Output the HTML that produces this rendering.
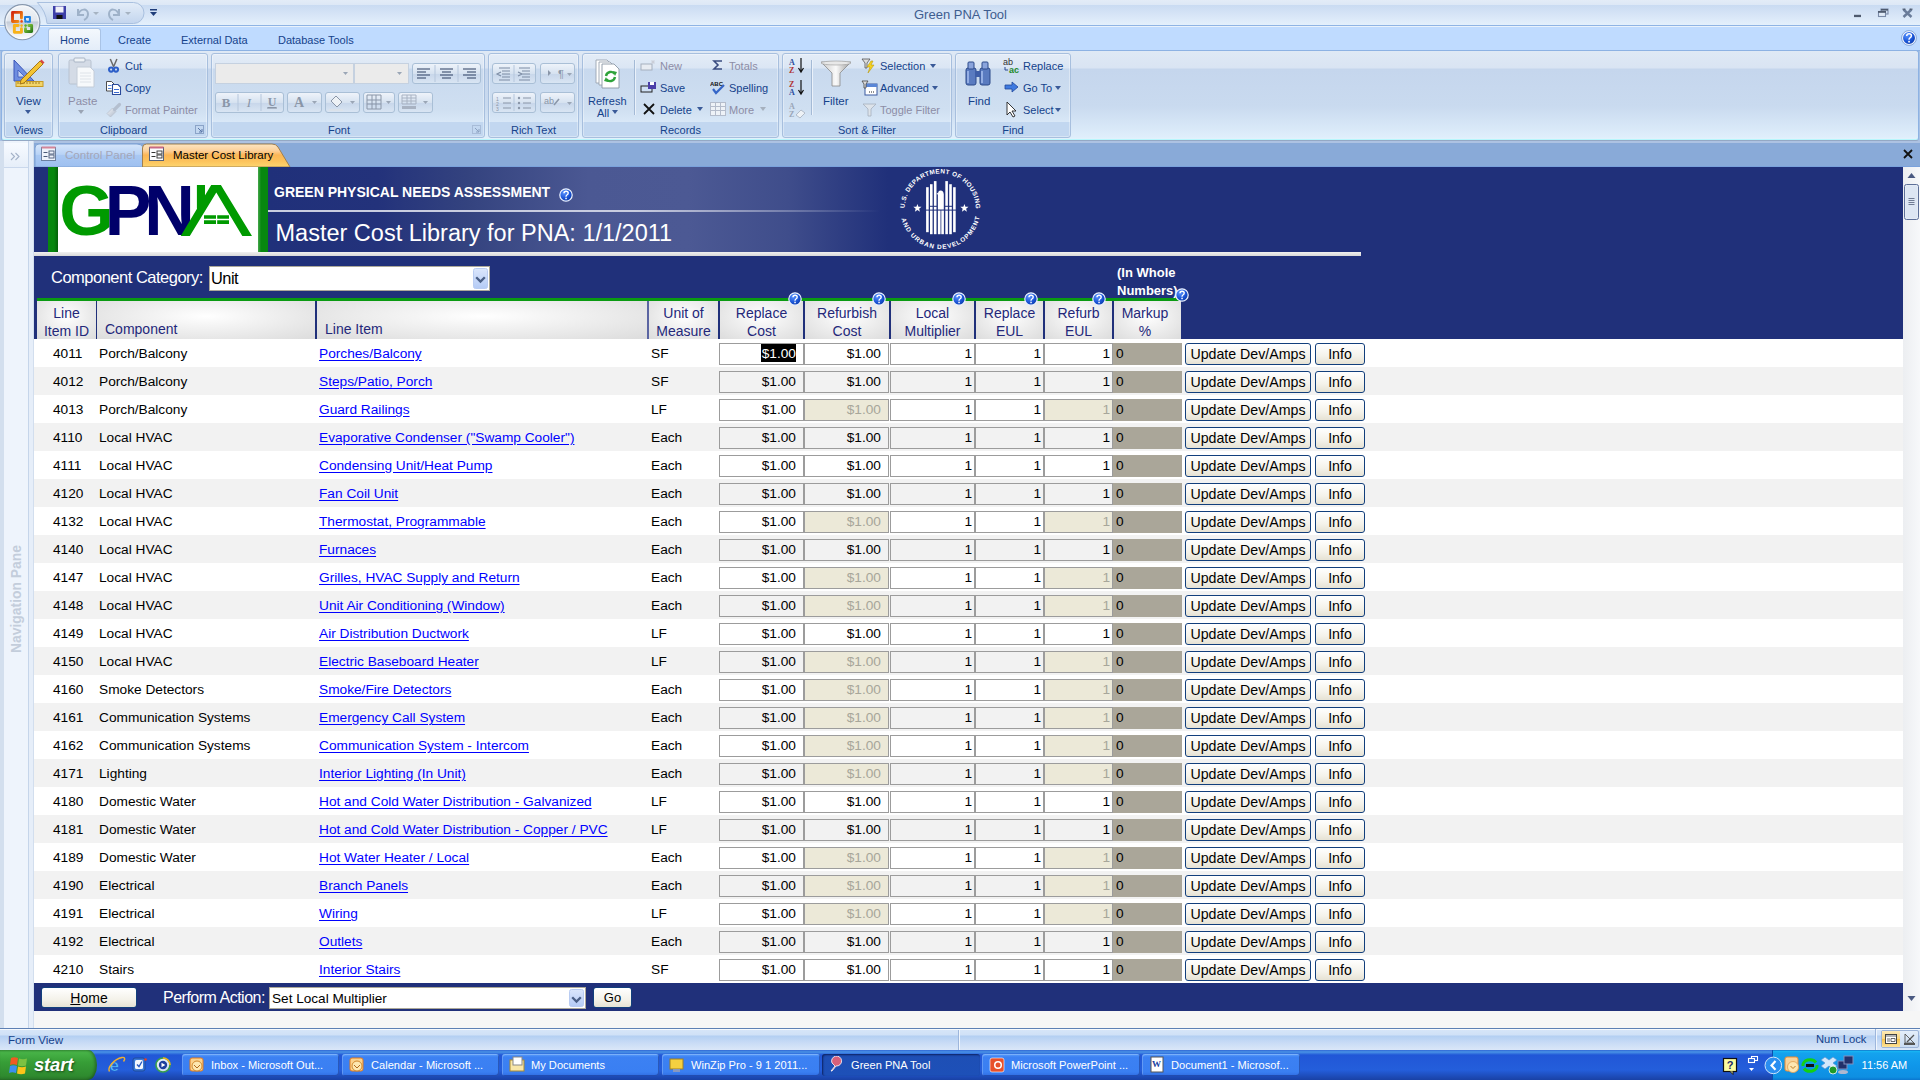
<!DOCTYPE html>
<html><head><meta charset="utf-8"><title>Green PNA Tool</title>
<style>
html,body{margin:0;padding:0;}
body{width:1920px;height:1080px;overflow:hidden;position:relative;background:#fff;font-family:"Liberation Sans",sans-serif;}
.a{position:absolute;}
#title{left:0;top:0;width:1920px;height:26px;background:linear-gradient(#e3ecf7 0,#dde8f6 5px,#c9dbf2 5px,#d6e4f6 14px,#e4f0fc 25px,#8fb4e4 25px);}
#ttxt{left:914px;top:7px;font-size:13px;color:#3e5d8f;white-space:nowrap;}
#tabs{left:0;top:26px;width:1920px;height:25px;background:linear-gradient(#e9f2fc 0,#e9f2fc 1px,#bfdbff 1px,#bfdbff 24px,#8db2e3 24px);}
.rt{top:34px;font-size:11px;color:#15428b;white-space:nowrap;}
#hometab{left:48px;top:28px;width:53px;height:24px;border:1px solid #a9c3e6;border-bottom:none;border-radius:3px 3px 0 0;background:linear-gradient(#f4f8fd,#e2ecf8);box-sizing:border-box;}
#ribbon{left:0;top:51px;width:1920px;height:90px;background:#a9c2e4;}
#ribbon2{left:1px;top:50px;width:1918px;height:91px;box-sizing:border-box;border:1px solid #8db2e3;border-bottom-color:#94a8c4;border-radius:3px;background:linear-gradient(#dfe9f5 0,#d9e4f3 17px,#c5d6ed 18px,#c9daef 55px,#dfeefb 86px,#e2f2fc 88px);box-shadow:inset 0 -1px 0 #b8f6fc;}
.grp{top:53px;height:85px;box-sizing:border-box;border:1px solid #a7bfde;border-radius:3px;background:linear-gradient(#e3ecf7 0,#dbe6f4 14px,#c8d9ee 15px,#cfdff1 55px,#d9e8f7 68px,#c2d7f0 68px,#c2d7f0 100%);box-shadow:inset 0 0 0 1px rgba(255,255,255,0.35);}
.gl{top:124px;font-size:11px;color:#15428b;text-align:center;white-space:nowrap;}
.rb{font-size:11px;color:#15428b;white-space:nowrap;margin-top:1px;}
.rb.dis{color:#8d8da6;}
.sb{box-sizing:border-box;border:1px solid #a9bfd6;border-radius:3px;background:linear-gradient(#eef3fa,#d6e2f0 50%,#c7d6ea 51%,#d9e5f3);}
.cb{box-sizing:border-box;border:1px solid #c5d1e0;background:#ebebeb;}
#doctabs{left:0;top:141px;width:1920px;height:26px;background:linear-gradient(#adc2e2 0,#adc2e2 2px,#89aad8 2px,#89aad8 25px,#7aa2dc 25px);}
#nav{left:0;top:141px;width:34px;height:887px;background:linear-gradient(90deg,#d3dfee 0,#d3dfee 4px,#eef4fc 4px,#eef4fc 28px,#c5d5ea 28px,#c5d5ea 29px,#e6eef9 29px,#e6eef9 33px,#d2deee 33px);}
#navin{display:none;}
#navtxt{left:-39px;top:591px;width:110px;transform:rotate(-90deg);font-size:13.9px;font-weight:bold;color:#c3cddb;white-space:nowrap;text-align:center;}
#vscroll{left:1903px;top:167px;width:17px;height:844px;background:linear-gradient(90deg,#eceef1,#f7f8fa);}
#status{left:0;top:1028px;width:1920px;height:22px;background:linear-gradient(#5d80b4 0,#5d80b4 1px,#f5f9fe 1px,#f5f9fe 2px,#d6e5f8 2px,#d0e1f7 7px,#b3cff2 8px,#c6daf5 14px,#dae7f8 22px);}
#taskbar{left:0;top:1050px;width:1920px;height:30px;background:linear-gradient(#3168d5 0,#4993e6 2px,#2157d7 5px,#245edb 20px,#1941a5 30px);}
.tbb{top:1054px;height:22px;box-sizing:border-box;border-radius:3px;background:linear-gradient(#5ea2fb 0,#3c81f3 3px,#3a7ff2 18px,#2f6ce2 22px);box-shadow:inset 1px 1px 0 rgba(255,255,255,0.2),inset -1px -1px 0 rgba(0,0,60,0.3);font-size:11.1px;color:#fff;white-space:nowrap;padding-left:29px;line-height:22px;}
.tbb.act{background:linear-gradient(#1e4fb5 0,#1d50b8 100%);box-shadow:inset 1px 1px 2px rgba(0,0,40,0.6);}
#start{left:0;top:1050px;width:97px;height:30px;border-radius:0 9px 9px 0/0 15px 15px 0;background:linear-gradient(#3c9f3c 0,#47b347 8%,#379e37 40%,#2f8b2f 85%,#2a7a2a 100%);box-shadow:inset -2px 0 3px rgba(0,0,0,0.3);}
#stxt{left:34px;top:1054px;font-size:18.5px;letter-spacing:-0.2px;font-style:italic;font-weight:bold;color:#fff;text-shadow:1px 1px 2px #1a4d1a;}
#tray{left:1773px;top:1050px;width:147px;height:30px;background:linear-gradient(#0c59b9 0,#18b9f4 1px,#14a3ee 3px,#0f97ea 15px,#0e8fe2 27px,#0a76cf 30px);box-shadow:-1px 0 0 #0a4fad;}
#form{left:34px;top:167px;width:1869px;height:861px;background:#f6f6f6;overflow:hidden;}
#hdr{left:0;top:0;width:1869px;height:172px;background:#20307a;}
#tband{left:234px;top:0;width:1093px;height:85px;background:linear-gradient(90deg,#20307a 0,#23327b 110px,#34437f 200px,#4b5893 320px,#4c5994 420px,#3f4d8b 520px,#20307a 620px,#20307a 100%);}
.t1{left:240px;top:17px;color:#fff;font-weight:bold;font-size:14px;white-space:nowrap;}
.t2{left:241.5px;top:53px;color:#fff;font-size:23.5px;white-space:nowrap;}
.help{width:14px;height:14px;border-radius:50%;background:radial-gradient(circle at 40% 35%,#7fb0ff 0,#2a64d6 55%,#153f9e 100%);box-shadow:0 0 0 1px #dfe8f8;}
.ccl{left:17px;top:101px;color:#fff;font-size:16.5px;letter-spacing:-0.5px;white-space:nowrap;}
.ccbox{left:175px;top:99px;width:281px;height:25px;background:#fff;box-sizing:border-box;border:1px solid #aca899;}
.ccbox span{position:absolute;left:1px;top:1.5px;font-size:16.4px;letter-spacing:-0.5px;color:#000;}
.dd{position:absolute;right:1px;top:1px;}
.iwn{left:1083px;top:96.5px;color:#fff;font-weight:bold;font-size:13px;line-height:18px;white-space:nowrap;}
.hc{top:134px;height:38px;background:radial-gradient(ellipse at 50% 40%,#ffffff 0,#f4f4f4 30%,#dcdcdc 100%);color:#24287a;font-size:14px;line-height:18.4px;padding-top:3px;box-sizing:border-box;white-space:nowrap;}
.hc.c{text-align:center;}
.hc.l{padding-left:8px;padding-top:1px;}
.row{left:0;width:1869px;height:28px;background:#fff;}
.row.g{background:#f2f2f2;}
.row span{font-size:13.7px;color:#000;white-space:nowrap;top:5px;line-height:20px;}
.id{left:19px;width:28px;text-align:center;}
.cp{left:65px;}
.li{left:285px;text-decoration:underline;color:#0000ff !important;text-underline-offset:1.6px;}
.um{left:617px;}
.bx{top:4px !important;height:22px;box-sizing:border-box;border:1px solid #9c9c9c;background:#fff;text-align:right;line-height:20px !important;}
.row.g .bx{background:#f2f2f2;}
.bx.dis{background:#ece9d8 !important;color:#a7a69a !important;}
.b1{left:685px;width:85px;padding-right:7px;}
.b2{left:770px;width:85px;padding-right:7px;}
.b3{left:856px;width:85px;padding-right:2px;}
.b4{left:941px;width:69px;padding-right:2px;}
.b5{left:1010px;width:69px;padding-right:2px;}
.sel{background:#000;color:#fff;font-weight:normal;display:inline-block;height:18px;line-height:19px;vertical-align:top;padding:0 0 0 1px;}
.mk{left:1079px;top:4px !important;width:69px;height:22px;background:#aaa699;line-height:21px !important;padding-left:3px;box-sizing:border-box;}
.btn{box-sizing:border-box;border:1px solid #123f7c;border-radius:3px;background:linear-gradient(#ffffff,#f4f2ea 60%,#e6e2d4);text-align:center;color:#000;}
.bu{left:1151px;top:4px !important;width:126px;height:22px;font-size:14.2px !important;line-height:20px !important;}
.bi{left:1281px;top:4px !important;width:50px;height:22px;font-size:14.2px !important;line-height:20px !important;}
#bbar{left:0;top:816px;width:1869px;height:28px;background:#20307a;}
.hb{left:7px;top:820px;width:96px;height:21px;font-size:14px;line-height:20px;}
.pal{left:129px;top:822px;color:#fff;font-size:16px;letter-spacing:-0.5px;white-space:nowrap;}
.pabox{left:235px;top:820px;width:317px;height:22px;background:#fff;box-sizing:border-box;border:1px solid #aca899;}
.pabox span{position:absolute;left:2px;top:3px;font-size:13.6px;color:#000;}
.pabox .dd{top:1px;right:1px;}
.gob{left:559px;top:820px;width:39px;height:21px;font-size:13px;line-height:20px;}

.hc.mk2{padding-right:5px;}

</style></head><body>
<div id="title" class="a"></div>
<div id="ttxt" class="a">Green PNA Tool</div>
<!-- QAT pill -->
<svg class="a" style="left:30px;top:0" width="120" height="26" viewBox="0 0 120 26"><defs><linearGradient id="qat" x1="0" y1="0" x2="0" y2="1"><stop offset="0" stop-color="#e4edf8"/><stop offset="0.5" stop-color="#d3e1f3"/><stop offset="1" stop-color="#c3d5ee"/></linearGradient></defs><path d="M7.3 2.5 H103.5 A10.5 10.5 0 0 1 103.5 23.5 H17 Q16 11 7.3 2.5 Z" fill="url(#qat)" stroke="#a9c0df" stroke-width="1"/></svg>

<svg class="a" style="left:52px;top:5px" width="16" height="16" viewBox="0 0 16 16"><rect x="1" y="1" width="13" height="13" fill="#3d3fa8"/><rect x="3.5" y="1.5" width="8" height="6" fill="#f0f0f8"/><rect x="4.5" y="10" width="6" height="4" fill="#111"/></svg>
<svg class="a" style="left:74px;top:5px" width="60" height="16" viewBox="0 0 60 16"><path d="M4 4 v6 h6 M4 10 C6 3 14 3 14 9 C14 12 12 14 10 15" fill="none" stroke="#9fb2c9" stroke-width="2"/><path d="M19 7 l3 3 3-3z" fill="#a6b3c2"/><path d="M48 4 v6 h-6 M48 10 C46 3 38 3 38 9 C38 12 40 14 42 15" fill="none" stroke="#9fb2c9" stroke-width="2" transform="translate(-3,0)"/><path d="M51 7 l3 3 3-3z" fill="#a6b3c2"/></svg>
<svg class="a" style="left:149px;top:8px" width="9" height="9" viewBox="0 0 9 9"><rect x="1" y="1" width="7" height="1.5" fill="#1f3d7a"/><path d="M1 4 h7 l-3.5 4z" fill="#1f3d7a"/></svg>
<!-- window controls -->
<svg class="a" style="left:1848px;top:4px" width="72" height="20" viewBox="0 0 72 20"><rect x="6" y="10.8" width="7" height="2.3" fill="#4e5a6e"/><rect x="33" y="5" width="7" height="5" fill="none" stroke="#7a8aa8" stroke-width="1.1"/><rect x="33" y="5" width="7" height="1.6" fill="#4e5a6e"/><rect x="30.5" y="7.5" width="7" height="5" fill="#dfe9f6" stroke="#7a8aa8" stroke-width="1.1"/><rect x="30" y="7" width="8" height="1.8" fill="#4e5a6e"/><path d="M55.5 5.5 L63.5 13 M63.5 5.5 L55.5 13" stroke="#6a7c9a" stroke-width="2.4"/><rect x="54.5" y="4.6" width="3" height="1.2" fill="#4e5a6e"/><rect x="61.5" y="4.6" width="3" height="1.2" fill="#4e5a6e"/></svg>
<div id="tabs" class="a"></div>
<div id="hometab" class="a"></div>
<div class="a rt" style="left:60px">Home</div>
<div class="a rt" style="left:118px">Create</div>
<div class="a rt" style="left:181px">External Data</div>
<div class="a rt" style="left:278px">Database Tools</div>
<svg class="a" style="left:1901px;top:30px" width="16" height="16" viewBox="0 0 16 16"><defs><radialGradient id="hg2" cx="35%" cy="30%" r="75%"><stop offset="0" stop-color="#5b95ff"/><stop offset="0.6" stop-color="#1c56d8"/><stop offset="1" stop-color="#0a3aa8"/></radialGradient></defs><circle cx="8" cy="8" r="6.6" fill="url(#hg2)" stroke="#f4f8ff" stroke-width="1.3"/><circle cx="8" cy="8" r="7.4" fill="none" stroke="#5a7fc0" stroke-width="0.6"/><path d="M5.7 6 Q5.7 3.8 8.1 3.8 Q10.4 3.8 10.4 5.8 Q10.4 7.1 9 7.9 Q8 8.5 8 9.8" fill="none" stroke="#fff" stroke-width="1.5"/><rect x="7.2" y="10.8" width="1.7" height="1.7" fill="#fff"/></svg>
<div id="ribbon" class="a"></div>
<div id="ribbon2" class="a"></div>
<!-- groups -->
<div class="a grp" style="left:4px;width:49px"></div>
<div class="a grp" style="left:58px;width:150px"></div>
<div class="a grp" style="left:211px;width:274px"></div>
<div class="a grp" style="left:488px;width:91px"></div>
<div class="a grp" style="left:582px;width:197px"></div>
<div class="a grp" style="left:782px;width:170px"></div>
<div class="a grp" style="left:955px;width:116px"></div>
<div class="a gl" style="left:4px;width:49px">Views</div>
<div class="a gl" style="left:58px;width:131px">Clipboard</div>
<div class="a gl" style="left:211px;width:256px">Font</div>
<div class="a gl" style="left:488px;width:91px">Rich Text</div>
<div class="a gl" style="left:582px;width:197px">Records</div>
<div class="a gl" style="left:782px;width:170px">Sort &amp; Filter</div>
<div class="a gl" style="left:955px;width:116px">Find</div>
<!-- Views -->
<svg class="a" style="left:12px;top:58px" width="34" height="32" viewBox="0 0 34 32"><path d="M2 2 L2 23 L22 23 Z" fill="#6f8ee0" stroke="#3b55b8" stroke-width="1"/><path d="M6 12 L6 19 L13 19 Z" fill="#c6d4f4" stroke="#3b55b8" stroke-width="0.8"/><rect x="4" y="23.5" width="27" height="5" fill="#f2d46a" stroke="#c79a24" stroke-width="1"/><path d="M6 24 v2 M9 24 v2 M12 24 v2 M15 24 v2 M18 24 v2 M21 24 v2 M24 24 v2 M27 24 v2" stroke="#8a6b16" stroke-width="0.8"/><path d="M9 22 L28 3 L31 6 L12 25 L8 26 Z" fill="#f3c333" stroke="#9c6d12" stroke-width="0.9"/><path d="M28 3 L31 6 L32.5 4.5 L29.5 1.5Z" fill="#d94545"/></svg>
<div class="a rb" style="left:16px;top:94px;font-size:11.5px">View</div>
<svg class="a" style="left:25px;top:110px" width="7" height="5"><path d="M0 0 h6 l-3 4z" fill="#3a5a98"/></svg>
<!-- Clipboard -->
<svg class="a" style="left:68px;top:57px" width="28" height="32" viewBox="0 0 28 32"><rect x="1" y="3" width="22" height="24" rx="1.5" fill="#d4dbe6" stroke="#b8c2d0"/><rect x="6" y="1" width="11" height="4" rx="1" fill="#eef2f6" stroke="#a8b4c4"/><path d="M9 10 h13 l4 4 v16 h-17z" fill="#f7f9fb" stroke="#c4ccd8"/><path d="M12 16 h11 M12 19 h11 M12 22 h11 M12 25 h11" stroke="#d8dee6" stroke-width="0.8"/></svg>
<div class="a rb dis" style="left:68px;top:94px;font-size:11.5px">Paste</div>
<svg class="a" style="left:78px;top:110px" width="7" height="5"><path d="M0 0 h6 l-3 4z" fill="#9aa4b4"/></svg>
<svg class="a" style="left:106px;top:58px" width="16" height="16" viewBox="0 0 16 16"><path d="M4.3 1 L7.6 8.8 M10.9 1 L7.6 8.8" stroke="#6a6a6a" stroke-width="1.5"/><circle cx="5.1" cy="11.6" r="2.1" fill="none" stroke="#2d5fc8" stroke-width="2"/><circle cx="10" cy="11.6" r="2.1" fill="none" stroke="#2d5fc8" stroke-width="2"/></svg>
<div class="a rb" style="left:125px;top:59px">Cut</div>
<svg class="a" style="left:105px;top:80px" width="17" height="16" viewBox="0 0 17 16"><path d="M1.5 1.5 h5 l2.5 2.5 v7 h-7.5z" fill="#fff" stroke="#3a3a3a" stroke-width="0.9"/><path d="M3 5.5 h3.5 M3 8.5 h3.5" stroke="#5a86d8" stroke-width="1"/><path d="M7.5 4.5 h5.5 l2.5 2.5 v7.5 h-8z" fill="#fff" stroke="#2a4a9a" stroke-width="1.1"/><path d="M9 9.5 h5 M9 12.5 h5" stroke="#3a6ad0" stroke-width="1"/></svg>
<div class="a rb" style="left:125px;top:81px">Copy</div>
<svg class="a" style="left:106px;top:102px" width="16" height="16" viewBox="0 0 16 16"><defs><linearGradient id="fpg" x1="0" y1="0" x2="1" y2="1"><stop offset="0" stop-color="#f2f5fa"/><stop offset="1" stop-color="#aeb8c8"/></linearGradient></defs><path d="M1 11.5 L6.5 6 L10 9.5 L4.5 15z" fill="url(#fpg)" stroke="#b6bfcc" stroke-width="0.7"/><path d="M8.5 7.5 L13.5 2.5" stroke="#b4bfcf" stroke-width="3.2" stroke-linecap="round"/></svg>
<div class="a rb dis" style="left:125px;top:103px">Format Painter</div>
<svg class="a" style="left:195px;top:125px" width="9" height="9"><rect x="0.5" y="0.5" width="8" height="8" fill="none" stroke="#8ba4c8"/><path d="M3 3 l4 4 M7 4 v3 h-3" stroke="#5a77a8" stroke-width="1" fill="none"/></svg>
<!-- Font -->
<div class="a cb" style="left:215px;top:63px;width:139px;height:21px"></div>
<div class="a cb" style="left:354px;top:63px;width:55px;height:21px"></div>
<svg class="a" style="left:343px;top:72px" width="6" height="4"><path d="M0 0 h5 l-2.5 3z" fill="#9aa6b6"/></svg>
<svg class="a" style="left:397px;top:72px" width="6" height="4"><path d="M0 0 h5 l-2.5 3z" fill="#9aa6b6"/></svg>
<div class="a sb" style="left:412px;top:63px;width:69px;height:21px"></div>
<svg class="a" style="left:412px;top:63px" width="69" height="21" viewBox="0 0 69 21"><path d="M23 2 v17 M46 2 v17" stroke="#b5c6dc"/><path d="M5 6 h13 M5 9 h9 M5 12 h13 M5 15 h9" stroke="#2c3e60" stroke-width="1.2"/><path d="M28 6 h13 M30 9 h9 M28 12 h13 M30 15 h9" stroke="#2c3e60" stroke-width="1.2"/><path d="M51 6 h13 M55 9 h9 M51 12 h13 M55 15 h9" stroke="#2c3e60" stroke-width="1.2"/></svg>
<div class="a sb" style="left:215px;top:92px;width:69px;height:21px"></div>
<svg class="a" style="left:215px;top:92px" width="69" height="21" viewBox="0 0 69 21"><path d="M23 2 v17 M46 2 v17" stroke="#b5c6dc"/><text x="11" y="15" font-family="Liberation Serif" font-weight="bold" font-size="13" fill="#8a96a8" text-anchor="middle">B</text><text x="34" y="15" font-family="Liberation Serif" font-style="italic" font-size="13" fill="#8a96a8" text-anchor="middle">I</text><text x="57" y="14" font-family="Liberation Serif" font-weight="bold" font-size="12" fill="#8a96a8" text-anchor="middle" text-decoration="underline">U</text><path d="M52 16 h10" stroke="#8a96a8"/></svg>
<div class="a sb" style="left:287px;top:92px;width:35px;height:21px"></div>
<svg class="a" style="left:287px;top:92px" width="35" height="21"><text x="12" y="15" font-family="Liberation Serif" font-weight="bold" font-size="14" fill="#8a96a8" text-anchor="middle">A</text><path d="M25 9 h5 l-2.5 3z" fill="#9aa6b6"/></svg>
<div class="a sb" style="left:325px;top:92px;width:35px;height:21px"></div>
<svg class="a" style="left:325px;top:92px" width="35" height="21"><path d="M6 9 l5 -5 l6 6 l-5 5z" fill="#eef2f6" stroke="#8a96a8"/><rect x="4" y="17" width="14" height="2" fill="#dbe2ea"/><path d="M25 9 h5 l-2.5 3z" fill="#9aa6b6"/></svg>
<div class="a sb" style="left:363px;top:92px;width:32px;height:21px"></div>
<svg class="a" style="left:363px;top:92px" width="32" height="21"><path d="M4 3 h14 v14 h-14z M4 8 h14 M4 12 h14 M9 3 v14 M13 3 v14" fill="none" stroke="#8a96a8"/><path d="M23 9 h5 l-2.5 3z" fill="#9aa6b6"/></svg>
<div class="a sb" style="left:398px;top:92px;width:35px;height:21px"></div>
<svg class="a" style="left:398px;top:92px" width="35" height="21"><path d="M4 3 h14 v9 h-14z M4 6 h14 M4 9 h14 M9 3 v9 M13 3 v9" fill="none" stroke="#a8b2c2"/><rect x="4" y="14" width="14" height="3" fill="#a8b2c2"/><path d="M25 9 h5 l-2.5 3z" fill="#9aa6b6"/></svg>
<svg class="a" style="left:472px;top:125px" width="9" height="9"><rect x="0.5" y="0.5" width="8" height="8" fill="none" stroke="#a8bcd8"/><path d="M3 3 l4 4 M7 4 v3 h-3" stroke="#8aa0c0" stroke-width="1" fill="none"/></svg>
<!-- Rich text -->
<div class="a sb" style="left:492px;top:63px;width:44px;height:21px"></div>
<div class="a sb" style="left:540px;top:63px;width:35px;height:21px"></div>
<div class="a sb" style="left:492px;top:92px;width:44px;height:21px"></div>
<div class="a sb" style="left:540px;top:92px;width:35px;height:21px"></div>
<svg class="a" style="left:492px;top:63px" width="84" height="50" viewBox="0 0 84 50"><path d="M22 2 v17 M22 31 v17" stroke="#b5c6dc"/>
<path d="M7 5 h11 M10 8 h8 M10 11 h8 M10 14 h8 M7 17 h11 M9 9 l-4 2 l4 2" fill="none" stroke="#7c8ca4" stroke-width="1.1"/>
<path d="M27 5 h11 M30 8 h8 M30 11 h8 M30 14 h8 M27 17 h11 M26 9 l4 2 l-4 2" fill="none" stroke="#7c8ca4" stroke-width="1.1"/>
<path d="M56 7 l3 3 l-3 3z" fill="#8a96a8"/><text x="66" y="15" font-family="Liberation Sans" font-size="11" fill="#8a96a8">¶</text><path d="M75 10 h5 l-2.5 3z" fill="#9aa6b6"/>
<path d="M11 35 h8 M11 40 h8 M11 45 h8" stroke="#8a96a8" stroke-width="1.1"/><text x="4" y="38" font-size="5" fill="#8a96a8" font-family="Liberation Sans">1</text><text x="4" y="43" font-size="5" fill="#8a96a8" font-family="Liberation Sans">2</text><text x="4" y="48" font-size="5" fill="#8a96a8" font-family="Liberation Sans">3</text>
<path d="M31 35 h8 M31 40 h8 M31 45 h8" stroke="#8a96a8" stroke-width="1.1"/><circle cx="27" cy="35" r="1.2" fill="#8a96a8"/><circle cx="27" cy="40" r="1.2" fill="#8a96a8"/><circle cx="27" cy="45" r="1.2" fill="#8a96a8"/>
<text x="52" y="41" font-family="Liberation Sans" font-size="9" fill="#8a96a8">ab</text><path d="M62 42 l5 -6" stroke="#8a96a8" stroke-width="1.5"/><path d="M75 39 h5 l-2.5 3z" fill="#9aa6b6"/></svg>
<!-- Records -->
<svg class="a" style="left:595px;top:59px" width="26" height="30" viewBox="0 0 26 30"><path d="M1 1 h11 l4 4 v19 h-15z" fill="#fff" stroke="#9aa4b0" stroke-width="0.9"/><path d="M4 3 h11 l4 4 v19 h-15z" fill="#fff" stroke="#9aa4b0" stroke-width="0.9"/><path d="M7 5 h12 l5 5 v19 h-17z" fill="#fff" stroke="#8a96a4" stroke-width="0.9"/><path d="M11 17 a5 5 0 0 1 9 -2" fill="none" stroke="#2ea33a" stroke-width="2.4"/><path d="M20 18 a5 5 0 0 1 -9 2" fill="none" stroke="#2ea33a" stroke-width="2.4"/><path d="M18 12 l4 1 l-2 4z M13 23 l-4 -1 l2 -4z" fill="#2ea33a"/></svg>
<div class="a rb" style="left:588px;top:94px">Refresh</div>
<div class="a rb" style="left:597px;top:106px">All</div>
<svg class="a" style="left:612px;top:110px" width="7" height="5"><path d="M0 0 h6 l-3 4z" fill="#3a5a98"/></svg>
<div class="a" style="left:634px;top:60px;width:1px;height:55px;background:#a4bad6;box-shadow:1px 0 0 #eaf1fa"></div>
<svg class="a" style="left:640px;top:59px" width="17" height="13" viewBox="0 0 17 13"><rect x="1" y="5" width="11" height="6" fill="#e8ecf2" stroke="#a6b0be"/><path d="M13 1 v4 M11 3 h4 M11.5 1.5 l3 3 M14.5 1.5 l-3 3" stroke="#c8ccd6" stroke-width="0.8"/></svg>
<div class="a rb dis" style="left:660px;top:59px">New</div>
<svg class="a" style="left:640px;top:81px" width="17" height="13" viewBox="0 0 17 13"><rect x="1" y="5" width="11" height="6" fill="#cfe0f4" stroke="#222"/><rect x="8" y="1" width="8" height="7" fill="#4b3fa8"/><rect x="10" y="1" width="4" height="3" fill="#fff"/></svg>
<div class="a rb" style="left:660px;top:81px">Save</div>
<svg class="a" style="left:642px;top:102px" width="14" height="14" viewBox="0 0 14 14"><path d="M2 2 L12 12 M12 2 L2 12" stroke="#111" stroke-width="1.8"/></svg>
<div class="a rb" style="left:660px;top:103px">Delete</div>
<svg class="a" style="left:697px;top:107px" width="7" height="5"><path d="M0 0 h6 l-3 4z" fill="#3a5a98"/></svg>
<svg class="a" style="left:712px;top:59px" width="12" height="12" viewBox="0 0 12 12"><path d="M10 2 H2 L6 6 L2 10 H10" fill="none" stroke="#3a4c80" stroke-width="1.6"/></svg>
<div class="a rb dis" style="left:729px;top:59px">Totals</div>
<svg class="a" style="left:710px;top:80px" width="17" height="15" viewBox="0 0 17 15"><text x="0" y="6" font-family="Liberation Sans" font-weight="bold" font-size="6" fill="#111">ABC</text><path d="M3 9 l3 4 l8 -8" fill="none" stroke="#3566c8" stroke-width="2.2"/></svg>
<div class="a rb" style="left:729px;top:81px">Spelling</div>
<svg class="a" style="left:710px;top:102px" width="16" height="14" viewBox="0 0 16 14"><rect x="0.5" y="0.5" width="15" height="13" fill="#eef2f7" stroke="#b4bccb"/><path d="M0.5 4.5 h15 M0.5 8.5 h15 M5.5 0.5 v13 M10.5 0.5 v13" stroke="#b4bccb"/></svg>
<div class="a rb dis" style="left:729px;top:103px">More</div>
<svg class="a" style="left:760px;top:107px" width="7" height="5"><path d="M0 0 h6 l-3 4z" fill="#a6b0be"/></svg>
<!-- Sort & Filter -->
<svg class="a" style="left:788px;top:57px" width="18" height="62" viewBox="0 0 18 62"><text x="1" y="8" font-family="Liberation Serif" font-weight="bold" font-size="8" fill="#2e4fa0">A</text><text x="1" y="16" font-family="Liberation Serif" font-weight="bold" font-size="8" fill="#b03434">Z</text><path d="M13 1 v13 M10.5 11 l2.5 4 l2.5 -4" stroke="#111" stroke-width="1.2" fill="none"/>
<text x="1" y="30" font-family="Liberation Serif" font-weight="bold" font-size="8" fill="#b03434">Z</text><text x="1" y="38" font-family="Liberation Serif" font-weight="bold" font-size="8" fill="#2e4fa0">A</text><path d="M13 23 v13 M10.5 33 l2.5 4 l2.5 -4" stroke="#111" stroke-width="1.2" fill="none"/>
<text x="1" y="52" font-family="Liberation Serif" font-weight="bold" font-size="8" fill="#9aa6b8">A</text><text x="1" y="60" font-family="Liberation Serif" font-weight="bold" font-size="8" fill="#9aa6b8">Z</text><path d="M8 58 l5 -5 l4 3 l-5 5z" fill="#eef2f6" stroke="#a6b0be" stroke-width="0.8"/></svg>
<div class="a" style="left:811px;top:60px;width:1px;height:55px;background:#a4bad6;box-shadow:1px 0 0 #eaf1fa"></div>
<svg class="a" style="left:820px;top:60px" width="32" height="28" viewBox="0 0 32 28"><defs><linearGradient id="fn" x1="0" x2="1"><stop offset="0" stop-color="#c8c8c8"/><stop offset="0.5" stop-color="#fafafa"/><stop offset="1" stop-color="#9a9a9a"/></linearGradient></defs><path d="M1 2 h30 l-11 11 v13 h-8 v-13z" fill="url(#fn)" stroke="#8a8a8a" stroke-width="0.8"/><ellipse cx="16" cy="3" rx="15" ry="2" fill="#e8e8e8" stroke="#999" stroke-width="0.6"/></svg>
<div class="a rb" style="left:823px;top:94px;font-size:11.5px">Filter</div>
<svg class="a" style="left:861px;top:58px" width="16" height="16" viewBox="0 0 16 16"><path d="M1 1 h8 l-3 4 v5 h-2 v-5z" fill="#ddd" stroke="#555" stroke-width="0.8"/><path d="M10 3 l-4 6 h3 l-2 6 l6 -8 h-3 l2 -4z" fill="#f7d21e" stroke="#b99a10" stroke-width="0.6"/></svg>
<div class="a rb" style="left:880px;top:59px">Selection</div>
<svg class="a" style="left:930px;top:64px" width="7" height="5"><path d="M0 0 h6 l-3 4z" fill="#3a5a98"/></svg>
<svg class="a" style="left:861px;top:80px" width="17" height="16" viewBox="0 0 17 16"><rect x="4" y="4" width="12" height="11" fill="#fff" stroke="#3a5aa0" stroke-width="1"/><rect x="4" y="4" width="12" height="3" fill="#5a86d6"/><path d="M1 1 h6 l-2 3 v4 h-2 v-4z" fill="#ddd" stroke="#444" stroke-width="0.8"/><path d="M8 12 h1 M10 12 h1 M12 12 h1" stroke="#222"/></svg>
<div class="a rb" style="left:880px;top:81px">Advanced</div>
<svg class="a" style="left:932px;top:86px" width="7" height="5"><path d="M0 0 h6 l-3 4z" fill="#3a5a98"/></svg>
<svg class="a" style="left:862px;top:103px" width="15" height="14" viewBox="0 0 15 14"><path d="M1 1 h13 l-5 5 v7 h-3 v-7z" fill="#dde3ea" stroke="#a6b0be" stroke-width="0.8"/></svg>
<div class="a rb dis" style="left:880px;top:103px">Toggle Filter</div>
<!-- Find -->
<svg class="a" style="left:963px;top:59px" width="30" height="28" viewBox="0 0 30 28"><rect x="3" y="9" width="10" height="17" rx="2" fill="#5a7bc0" stroke="#2c4a8a"/><rect x="17" y="9" width="10" height="17" rx="2" fill="#5a7bc0" stroke="#2c4a8a"/><rect x="5" y="3" width="6" height="7" rx="1" fill="#8aa4dc" stroke="#2c4a8a"/><rect x="19" y="3" width="6" height="7" rx="1" fill="#8aa4dc" stroke="#2c4a8a"/><rect x="12" y="12" width="6" height="6" fill="#3f5fa8"/><path d="M5 12 v12 M19 12 v12" stroke="#a8c0f0" stroke-width="1.5"/></svg>
<div class="a rb" style="left:968px;top:94px;font-size:11.5px">Find</div>
<svg class="a" style="left:1003px;top:57px" width="18" height="17" viewBox="0 0 18 17"><text x="0" y="8" font-family="Liberation Sans" font-size="9" fill="#333">ab</text><text x="6" y="16" font-family="Liberation Sans" font-weight="bold" font-size="9" fill="#1f8a2a">ac</text><path d="M2 10 v3 h3" stroke="#2a4a90" fill="none"/></svg>
<div class="a rb" style="left:1023px;top:59px">Replace</div>
<svg class="a" style="left:1004px;top:81px" width="15" height="12" viewBox="0 0 15 12"><path d="M1 4 h7 v-3 l6 5 l-6 5 v-3 h-7z" fill="#3f7ae0" stroke="#21469a" stroke-width="0.8"/></svg>
<div class="a rb" style="left:1023px;top:81px">Go To</div>
<svg class="a" style="left:1055px;top:86px" width="7" height="5"><path d="M0 0 h6 l-3 4z" fill="#3a5a98"/></svg>
<svg class="a" style="left:1006px;top:101px" width="12" height="17" viewBox="0 0 12 17"><path d="M1 1 v13 l3 -3 l3 5 l2 -1 l-3 -5 h4z" fill="#fff" stroke="#222" stroke-width="0.9"/></svg>
<div class="a rb" style="left:1023px;top:103px">Select</div>
<svg class="a" style="left:1055px;top:108px" width="7" height="5"><path d="M0 0 h6 l-3 4z" fill="#3a5a98"/></svg>
<svg class="a" style="left:0;top:0" width="46" height="46" viewBox="0 0 46 46">
 <defs>
  <linearGradient id="obg" x1="0" y1="0" x2="0" y2="1"><stop offset="0" stop-color="#f4f6f9"/><stop offset="0.45" stop-color="#e2e7ee"/><stop offset="0.5" stop-color="#c4ccd8"/><stop offset="0.75" stop-color="#e6eaf0"/><stop offset="1" stop-color="#fbfcfd"/></linearGradient>
  <linearGradient id="ored" x1="0" y1="0" x2="1" y2="1"><stop offset="0" stop-color="#d2260c"/><stop offset="1" stop-color="#f79a12"/></linearGradient>
  <linearGradient id="ogrn" x1="0" y1="0" x2="1" y2="1"><stop offset="0" stop-color="#8fcf3a"/><stop offset="1" stop-color="#2f7d1c"/></linearGradient>
 </defs>
 <circle cx="22.3" cy="22.2" r="17.6" fill="url(#obg)" stroke="#8797ad" stroke-width="1.1"/>
 <circle cx="22.3" cy="22.2" r="16.4" fill="none" stroke="#fff" stroke-width="0.8" opacity="0.7"/>
 <path d="M21.45 18 V12.35 H12.55 V21.45 H18" fill="none" stroke="url(#ored)" stroke-width="2.9" stroke-linejoin="round" stroke-linecap="round"/>
 <path d="M25 19.7 V17 H29.9 V21.7 H27.5" fill="none" stroke="#1f7fe0" stroke-width="2" stroke-linejoin="round" stroke-linecap="round"/>
 <path d="M18.2 25.45 H14.35 V32.35 H21.45 V28.8" fill="none" stroke="#f8b21a" stroke-width="2.9" stroke-linejoin="round" stroke-linecap="round"/>
 <path d="M28.8 25.45 H31.65 V31.45 H25.45 V28.8" fill="none" stroke="url(#ogrn)" stroke-width="2.9" stroke-linejoin="round" stroke-linecap="round"/>
 <circle cx="21.6" cy="21.4" r="1.3" fill="#ee4a10"/><circle cx="25.6" cy="21.4" r="1.3" fill="#1f7fe0"/><circle cx="21.6" cy="25.6" r="1.3" fill="#f8b21a"/><circle cx="25.6" cy="25.6" r="1.3" fill="#5bb02a"/>
</svg>
<div id="doctabs" class="a"></div>
<!-- control panel tab -->
<svg class="a" style="left:34px;top:143px" width="260" height="25" viewBox="0 0 260 25">
 <defs>
  <linearGradient id="tb1" x1="0" y1="0" x2="0" y2="1"><stop offset="0" stop-color="#d6e6fb"/><stop offset="0.45" stop-color="#b9d3f6"/><stop offset="0.5" stop-color="#a9c8f3"/><stop offset="1" stop-color="#9ec0f0"/></linearGradient>
  <linearGradient id="tb2" x1="0" y1="0" x2="0" y2="1"><stop offset="0" stop-color="#fde6c2"/><stop offset="0.3" stop-color="#fccf98"/><stop offset="0.48" stop-color="#fbb656"/><stop offset="0.75" stop-color="#fcc35c"/><stop offset="1" stop-color="#fdd670"/></linearGradient>
 </defs>
 <path d="M1 24 L1 5 Q1 1 5 1 L103 1 Q107 1 109 4 L116 24 Z" fill="url(#tb1)" stroke="#7fa2d4" stroke-width="1"/>
 <path d="M108.5 24 L108.5 5 Q108.5 1 112.5 1 L238 1 Q242 1 244 4 L256 24 Z" fill="url(#tb2)" stroke="#a08050" stroke-width="1"/>
 <g transform="translate(7,3)"><rect x="0.5" y="1.5" width="14" height="13" fill="#eef3fb" stroke="#6b7fa0"/><rect x="0.5" y="0.5" width="14" height="2" fill="#d4869a"/><path d="M2.5 6.5 h4 M2.5 10.5 h4" stroke="#4a5a78"/><rect x="8" y="5" width="5" height="3" fill="none" stroke="#4a5a78" stroke-width="0.9"/><rect x="8" y="9" width="5" height="3" fill="none" stroke="#4a5a78" stroke-width="0.9"/></g>
 <g transform="translate(115,3)"><rect x="0.5" y="1.5" width="14" height="13" fill="#fbfcfe" stroke="#56627a"/><rect x="0.5" y="0.5" width="14" height="2" fill="#c86a86"/><path d="M2.5 6.5 h4 M2.5 10.5 h4" stroke="#333"/><rect x="8" y="5" width="5" height="3" fill="none" stroke="#333" stroke-width="0.9"/><rect x="8" y="9" width="5" height="3" fill="none" stroke="#333" stroke-width="0.9"/></g>
 <text x="31" y="16" font-family="Liberation Sans" font-size="11.6" fill="#a4a6b8">Control Panel</text>
 <text x="139" y="16" font-family="Liberation Sans" font-size="11.5" fill="#000">Master Cost Library</text>
</svg>
<svg class="a" style="left:1902px;top:148px" width="12" height="12" viewBox="0 0 12 12"><path d="M2 2 L10 10 M10 2 L2 10" stroke="#111" stroke-width="1.8"/></svg>
<div id="nav" class="a"></div>
<div id="navin" class="a"></div>
<div class="a" style="left:4px;top:143px;width:24px;height:24px;background:linear-gradient(#f7faff,#e6eef9);border-bottom:1px solid #cad8ec"></div>
<svg class="a" style="left:10px;top:152px" width="12" height="10" viewBox="0 0 12 10"><path d="M1 1 l3.5 3.5 l-3.5 3.5 M5.5 1 l3.5 3.5 l-3.5 3.5" fill="none" stroke="#a4b2c8" stroke-width="1.1"/></svg>
<div id="navtxt" class="a">Navigation Pane</div>
<div id="vscroll" class="a"></div>
<svg class="a" style="left:1903px;top:167px" width="17" height="844" viewBox="0 0 17 844"><path d="M4.5 11 L8.5 6 L12.5 11Z" fill="#4a5a82"/><rect x="1.5" y="17.5" width="14" height="35" rx="2" fill="#e4ebf5" stroke="#5d6f98"/><rect x="3" y="19" width="11" height="32" fill="#dde6f3"/><path d="M5.5 31.5 h6 M5.5 33.5 h6 M5.5 35.5 h6 M5.5 37.5 h6" stroke="#707c94" stroke-width="1"/><path d="M4.5 829 L8.5 834 L12.5 829Z" fill="#4a5a82"/></svg>
<div id="form" class="a">
<div id="hdr" class="a"></div>
<div class="a" style="left:14px;top:0;width:10px;height:85px;background:linear-gradient(90deg,#07870f 0,#07870f 6px,#05600a 10px)"></div>
<div class="a" style="left:24px;top:0;width:200px;height:85px;background:#fff"></div>
<div class="a" style="left:224px;top:0;width:10px;height:85px;background:linear-gradient(90deg,#48a84e 0,#07870f 3px,#07870f 10px)"></div>
<svg class="a" style="left:24px;top:0" width="200" height="85" viewBox="0 0 200 85"><text x="1.2" y="68" font-family="Liberation Sans" font-weight="bold" font-size="70" fill="#009a00">G</text>
<text x="46.7" y="68" font-family="Liberation Sans" font-weight="bold" font-size="70" fill="#00006a">P</text>
<text x="86.3" y="68" font-family="Liberation Sans" font-weight="bold" font-size="70" fill="#00006a">N</text>
<path d="M122.7 68.9 L153.2 18 L162.9 18 L194 68.9 L184.3 68.9 L158.3 25.5 L131.8 68.9 Z M138.9 18 L147 18 L147 28.4 L139.2 41.4 L138.9 41.4 Z" fill="#009a00"/>
<path d="M146 48.2 h12 v3.5 h-12z M159.2 48.2 h11.8 v3.5 h-11.8z M146 53.2 h12 v3.7 h-12z M159.2 53.2 h11.8 v3.7 h-11.8z" fill="#009a00"/></svg>
<div id="tband" class="a"></div>
<div class="a" style="left:234px;top:43px;width:612px;height:2px;background:linear-gradient(90deg,#c9cde0 0,#c9cde0 60%,rgba(201,205,224,0) 100%)"></div>
<div class="a t1">GREEN PHYSICAL NEEDS ASSESSMENT</div>
<svg class="a" style="left:525px;top:21px" width="14" height="14" viewBox="0 0 14 14"><defs><radialGradient id="hg" cx="35%" cy="30%" r="75%"><stop offset="0" stop-color="#5b95ff"/><stop offset="0.6" stop-color="#1c56d8"/><stop offset="1" stop-color="#0a3aa8"/></radialGradient></defs><circle cx="7" cy="7" r="6.2" fill="url(#hg)" stroke="#eef4ff" stroke-width="1.2"/><path d="M5 5.3 Q5 3.3 7.1 3.3 Q9.2 3.3 9.2 5.1 Q9.2 6.3 7.9 7 Q7 7.5 7 8.8" fill="none" stroke="#fff" stroke-width="1.4"/><rect x="6.3" y="9.7" width="1.5" height="1.5" fill="#fff"/></svg>
<div class="a t2">Master Cost Library for PNA: 1/1/2011</div>
<div class="a" style="left:0;top:85px;width:1327px;height:4px;background:linear-gradient(#f0f0f0,#d8d8d8)"></div>
<svg class="a" style="left:861px;top:-3px" width="90" height="90" viewBox="0 0 90 90"><defs><path id="sp1" d="M9.71 44.18 A35.6 35.6 0 0 1 80.89 44.18"/><path id="sp2" d="M6.29 54.53 A40.2 40.2 0 0 0 84.62 53.16"/></defs>
<text font-family="Liberation Sans" font-weight="bold" font-size="6.4" fill="#fff"><textPath href="#sp1" textLength="110.6" lengthAdjust="spacing">U.S. DEPARTMENT OF HOUSING</textPath></text>
<text font-family="Liberation Sans" font-weight="bold" font-size="6.4" fill="#fff"><textPath href="#sp2" textLength="108.0" lengthAdjust="spacing">AND URBAN DEVELOPMENT</textPath></text>
<rect x="31.1" y="23.2" width="2.6" height="22.4" fill="#fff"/><rect x="35" y="20.2" width="2.6" height="25.4" fill="#fff"/><rect x="38.9" y="17.1" width="2.6" height="28.5" fill="#fff"/><rect x="50.3" y="17.1" width="2.6" height="28.5" fill="#fff"/><rect x="54.2" y="20.2" width="2.6" height="25.4" fill="#fff"/><rect x="58.1" y="23.2" width="2.6" height="22.4" fill="#fff"/><rect x="31.1" y="46.6" width="2.6" height="21.6" fill="#fff"/><rect x="35" y="46.6" width="2.6" height="23.6" fill="#fff"/><rect x="38.9" y="46.6" width="2.6" height="23.6" fill="#fff"/><rect x="42.9" y="46.6" width="2.6" height="23.6" fill="#fff"/><rect x="46.3" y="46.6" width="2.6" height="23.6" fill="#fff"/><rect x="50.3" y="46.6" width="2.6" height="23.6" fill="#fff"/><rect x="54.2" y="46.6" width="2.6" height="23.6" fill="#fff"/><rect x="58.1" y="46.6" width="2.6" height="21.6" fill="#fff"/><rect x="34.5" y="41.8" width="7.5" height="1" fill="#20307a"/><rect x="50" y="41.8" width="7.5" height="1" fill="#20307a"/><path d="M42.9 45.6 V30.5 Q42.9 26.6 45.6 26.6 Q48.6 26.6 48.8 30.5 V45.6 Z" fill="#fff"/><path d="M43 28.8 l-1.6 1.2 l1.6 0.6z" fill="#fff"/>
<path d="M22.40 39.90 L23.46 42.74 L26.49 42.87 L24.12 44.76 L24.93 47.68 L22.40 46.01 L19.87 47.68 L20.68 44.76 L18.31 42.87 L21.34 42.74Z" fill="#fff"/><path d="M69.40 39.90 L70.46 42.74 L73.49 42.87 L71.12 44.76 L71.93 47.68 L69.40 46.01 L66.87 47.68 L67.68 44.76 L65.31 42.87 L68.34 42.74Z" fill="#fff"/></svg>
<div class="a ccl">Component Category:</div>
<div class="a ccbox"><span>Unit</span><svg class="dd" width="15" height="21" viewBox="0 0 15 21"><defs><linearGradient id="ddg" x1="0" y1="0" x2="0" y2="1"><stop offset="0" stop-color="#dbe6fc"/><stop offset="1" stop-color="#b4cbf6"/></linearGradient></defs><rect x="0.5" y="0.5" width="14" height="20" rx="2" fill="url(#ddg)" stroke="#b9ccf2"/><path d="M3.2 9.2 L7.5 13.5 L11.8 9.2" fill="none" stroke="#4a5f86" stroke-width="2.3"/></svg></div>
<div class="a iwn">(In Whole<br>Numbers)</div>
<div class="a" style="left:3px;top:131px;width:1144px;height:3px;background:#0a9a12"></div>
<div class="a hc c" style="left:3px;width:59px">Line<br>Item ID</div>
<div class="a hc l" style="left:63px;width:218px"><br>Component</div>
<div class="a hc l" style="left:283px;width:330px"><br>Line Item</div>
<div class="a hc c" style="left:615px;width:69px">Unit of<br>Measure</div>
<div class="a hc c" style="left:686px;width:83px">Replace<br>Cost</div>
<div class="a hc c" style="left:771px;width:84px">Refurbish<br>Cost</div>
<div class="a hc c" style="left:857px;width:83px">Local<br>Multiplier</div>
<div class="a hc c" style="left:942px;width:67px">Replace<br>EUL</div>
<div class="a hc c" style="left:1011px;width:67px">Refurb<br>EUL</div>
<div class="a hc c mk2" style="left:1080px;width:67px">Markup<br>%</div>
<div class="a" style="left:613px;top:134px;width:2px;height:38px;background:#5b65a2"></div>
<svg class="a" style="left:754px;top:125px" width="14" height="14" viewBox="0 0 14 14"><defs><radialGradient id="hg" cx="35%" cy="30%" r="75%"><stop offset="0" stop-color="#5b95ff"/><stop offset="0.6" stop-color="#1c56d8"/><stop offset="1" stop-color="#0a3aa8"/></radialGradient></defs><circle cx="7" cy="7" r="6.2" fill="url(#hg)" stroke="#eef4ff" stroke-width="1.2"/><path d="M5 5.3 Q5 3.3 7.1 3.3 Q9.2 3.3 9.2 5.1 Q9.2 6.3 7.9 7 Q7 7.5 7 8.8" fill="none" stroke="#fff" stroke-width="1.4"/><rect x="6.3" y="9.7" width="1.5" height="1.5" fill="#fff"/></svg>
<svg class="a" style="left:838px;top:125px" width="14" height="14" viewBox="0 0 14 14"><defs><radialGradient id="hg" cx="35%" cy="30%" r="75%"><stop offset="0" stop-color="#5b95ff"/><stop offset="0.6" stop-color="#1c56d8"/><stop offset="1" stop-color="#0a3aa8"/></radialGradient></defs><circle cx="7" cy="7" r="6.2" fill="url(#hg)" stroke="#eef4ff" stroke-width="1.2"/><path d="M5 5.3 Q5 3.3 7.1 3.3 Q9.2 3.3 9.2 5.1 Q9.2 6.3 7.9 7 Q7 7.5 7 8.8" fill="none" stroke="#fff" stroke-width="1.4"/><rect x="6.3" y="9.7" width="1.5" height="1.5" fill="#fff"/></svg>
<svg class="a" style="left:918px;top:125px" width="14" height="14" viewBox="0 0 14 14"><defs><radialGradient id="hg" cx="35%" cy="30%" r="75%"><stop offset="0" stop-color="#5b95ff"/><stop offset="0.6" stop-color="#1c56d8"/><stop offset="1" stop-color="#0a3aa8"/></radialGradient></defs><circle cx="7" cy="7" r="6.2" fill="url(#hg)" stroke="#eef4ff" stroke-width="1.2"/><path d="M5 5.3 Q5 3.3 7.1 3.3 Q9.2 3.3 9.2 5.1 Q9.2 6.3 7.9 7 Q7 7.5 7 8.8" fill="none" stroke="#fff" stroke-width="1.4"/><rect x="6.3" y="9.7" width="1.5" height="1.5" fill="#fff"/></svg>
<svg class="a" style="left:990px;top:125px" width="14" height="14" viewBox="0 0 14 14"><defs><radialGradient id="hg" cx="35%" cy="30%" r="75%"><stop offset="0" stop-color="#5b95ff"/><stop offset="0.6" stop-color="#1c56d8"/><stop offset="1" stop-color="#0a3aa8"/></radialGradient></defs><circle cx="7" cy="7" r="6.2" fill="url(#hg)" stroke="#eef4ff" stroke-width="1.2"/><path d="M5 5.3 Q5 3.3 7.1 3.3 Q9.2 3.3 9.2 5.1 Q9.2 6.3 7.9 7 Q7 7.5 7 8.8" fill="none" stroke="#fff" stroke-width="1.4"/><rect x="6.3" y="9.7" width="1.5" height="1.5" fill="#fff"/></svg>
<svg class="a" style="left:1058px;top:125px" width="14" height="14" viewBox="0 0 14 14"><defs><radialGradient id="hg" cx="35%" cy="30%" r="75%"><stop offset="0" stop-color="#5b95ff"/><stop offset="0.6" stop-color="#1c56d8"/><stop offset="1" stop-color="#0a3aa8"/></radialGradient></defs><circle cx="7" cy="7" r="6.2" fill="url(#hg)" stroke="#eef4ff" stroke-width="1.2"/><path d="M5 5.3 Q5 3.3 7.1 3.3 Q9.2 3.3 9.2 5.1 Q9.2 6.3 7.9 7 Q7 7.5 7 8.8" fill="none" stroke="#fff" stroke-width="1.4"/><rect x="6.3" y="9.7" width="1.5" height="1.5" fill="#fff"/></svg>
<svg class="a" style="left:1141px;top:121px" width="14" height="14" viewBox="0 0 14 14"><defs><radialGradient id="hg" cx="35%" cy="30%" r="75%"><stop offset="0" stop-color="#5b95ff"/><stop offset="0.6" stop-color="#1c56d8"/><stop offset="1" stop-color="#0a3aa8"/></radialGradient></defs><circle cx="7" cy="7" r="6.2" fill="url(#hg)" stroke="#eef4ff" stroke-width="1.2"/><path d="M5 5.3 Q5 3.3 7.1 3.3 Q9.2 3.3 9.2 5.1 Q9.2 6.3 7.9 7 Q7 7.5 7 8.8" fill="none" stroke="#fff" stroke-width="1.4"/><rect x="6.3" y="9.7" width="1.5" height="1.5" fill="#fff"/></svg>
<div class="a row " style="top:172px">
<span class="a id">4011</span>
<span class="a cp">Porch/Balcony</span>
<span class="a li">Porches/Balcony</span>
<span class="a um">SF</span>
<span class="a bx b1"> <b class="sel">$1.00</b></span>
<span class="a bx b2 ">$1.00</span>
<span class="a bx b3">1</span>
<span class="a bx b4">1</span>
<span class="a bx b5 ">1</span>
<span class="a mk">0</span>
<span class="a btn bu">Update Dev/Amps</span>
<span class="a btn bi">Info</span>
</div>
<div class="a row g" style="top:200px">
<span class="a id">4012</span>
<span class="a cp">Porch/Balcony</span>
<span class="a li">Steps/Patio, Porch</span>
<span class="a um">SF</span>
<span class="a bx b1">$1.00</span>
<span class="a bx b2 ">$1.00</span>
<span class="a bx b3">1</span>
<span class="a bx b4">1</span>
<span class="a bx b5 ">1</span>
<span class="a mk">0</span>
<span class="a btn bu">Update Dev/Amps</span>
<span class="a btn bi">Info</span>
</div>
<div class="a row " style="top:228px">
<span class="a id">4013</span>
<span class="a cp">Porch/Balcony</span>
<span class="a li">Guard Railings</span>
<span class="a um">LF</span>
<span class="a bx b1">$1.00</span>
<span class="a bx b2 dis">$1.00</span>
<span class="a bx b3">1</span>
<span class="a bx b4">1</span>
<span class="a bx b5 dis">1</span>
<span class="a mk">0</span>
<span class="a btn bu">Update Dev/Amps</span>
<span class="a btn bi">Info</span>
</div>
<div class="a row g" style="top:256px">
<span class="a id">4110</span>
<span class="a cp">Local HVAC</span>
<span class="a li">Evaporative Condenser (&quot;Swamp Cooler&quot;)</span>
<span class="a um">Each</span>
<span class="a bx b1">$1.00</span>
<span class="a bx b2 ">$1.00</span>
<span class="a bx b3">1</span>
<span class="a bx b4">1</span>
<span class="a bx b5 ">1</span>
<span class="a mk">0</span>
<span class="a btn bu">Update Dev/Amps</span>
<span class="a btn bi">Info</span>
</div>
<div class="a row " style="top:284px">
<span class="a id">4111</span>
<span class="a cp">Local HVAC</span>
<span class="a li">Condensing Unit/Heat Pump</span>
<span class="a um">Each</span>
<span class="a bx b1">$1.00</span>
<span class="a bx b2 ">$1.00</span>
<span class="a bx b3">1</span>
<span class="a bx b4">1</span>
<span class="a bx b5 ">1</span>
<span class="a mk">0</span>
<span class="a btn bu">Update Dev/Amps</span>
<span class="a btn bi">Info</span>
</div>
<div class="a row g" style="top:312px">
<span class="a id">4120</span>
<span class="a cp">Local HVAC</span>
<span class="a li">Fan Coil Unit</span>
<span class="a um">Each</span>
<span class="a bx b1">$1.00</span>
<span class="a bx b2 ">$1.00</span>
<span class="a bx b3">1</span>
<span class="a bx b4">1</span>
<span class="a bx b5 ">1</span>
<span class="a mk">0</span>
<span class="a btn bu">Update Dev/Amps</span>
<span class="a btn bi">Info</span>
</div>
<div class="a row " style="top:340px">
<span class="a id">4132</span>
<span class="a cp">Local HVAC</span>
<span class="a li">Thermostat, Programmable</span>
<span class="a um">Each</span>
<span class="a bx b1">$1.00</span>
<span class="a bx b2 dis">$1.00</span>
<span class="a bx b3">1</span>
<span class="a bx b4">1</span>
<span class="a bx b5 dis">1</span>
<span class="a mk">0</span>
<span class="a btn bu">Update Dev/Amps</span>
<span class="a btn bi">Info</span>
</div>
<div class="a row g" style="top:368px">
<span class="a id">4140</span>
<span class="a cp">Local HVAC</span>
<span class="a li">Furnaces</span>
<span class="a um">Each</span>
<span class="a bx b1">$1.00</span>
<span class="a bx b2 ">$1.00</span>
<span class="a bx b3">1</span>
<span class="a bx b4">1</span>
<span class="a bx b5 ">1</span>
<span class="a mk">0</span>
<span class="a btn bu">Update Dev/Amps</span>
<span class="a btn bi">Info</span>
</div>
<div class="a row " style="top:396px">
<span class="a id">4147</span>
<span class="a cp">Local HVAC</span>
<span class="a li">Grilles, HVAC Supply and Return</span>
<span class="a um">Each</span>
<span class="a bx b1">$1.00</span>
<span class="a bx b2 dis">$1.00</span>
<span class="a bx b3">1</span>
<span class="a bx b4">1</span>
<span class="a bx b5 dis">1</span>
<span class="a mk">0</span>
<span class="a btn bu">Update Dev/Amps</span>
<span class="a btn bi">Info</span>
</div>
<div class="a row g" style="top:424px">
<span class="a id">4148</span>
<span class="a cp">Local HVAC</span>
<span class="a li">Unit Air Conditioning (Window)</span>
<span class="a um">Each</span>
<span class="a bx b1">$1.00</span>
<span class="a bx b2 dis">$1.00</span>
<span class="a bx b3">1</span>
<span class="a bx b4">1</span>
<span class="a bx b5 dis">1</span>
<span class="a mk">0</span>
<span class="a btn bu">Update Dev/Amps</span>
<span class="a btn bi">Info</span>
</div>
<div class="a row " style="top:452px">
<span class="a id">4149</span>
<span class="a cp">Local HVAC</span>
<span class="a li">Air Distribution Ductwork</span>
<span class="a um">LF</span>
<span class="a bx b1">$1.00</span>
<span class="a bx b2 ">$1.00</span>
<span class="a bx b3">1</span>
<span class="a bx b4">1</span>
<span class="a bx b5 ">1</span>
<span class="a mk">0</span>
<span class="a btn bu">Update Dev/Amps</span>
<span class="a btn bi">Info</span>
</div>
<div class="a row g" style="top:480px">
<span class="a id">4150</span>
<span class="a cp">Local HVAC</span>
<span class="a li">Electric Baseboard Heater</span>
<span class="a um">LF</span>
<span class="a bx b1">$1.00</span>
<span class="a bx b2 dis">$1.00</span>
<span class="a bx b3">1</span>
<span class="a bx b4">1</span>
<span class="a bx b5 dis">1</span>
<span class="a mk">0</span>
<span class="a btn bu">Update Dev/Amps</span>
<span class="a btn bi">Info</span>
</div>
<div class="a row " style="top:508px">
<span class="a id">4160</span>
<span class="a cp">Smoke Detectors</span>
<span class="a li">Smoke/Fire Detectors</span>
<span class="a um">Each</span>
<span class="a bx b1">$1.00</span>
<span class="a bx b2 dis">$1.00</span>
<span class="a bx b3">1</span>
<span class="a bx b4">1</span>
<span class="a bx b5 dis">1</span>
<span class="a mk">0</span>
<span class="a btn bu">Update Dev/Amps</span>
<span class="a btn bi">Info</span>
</div>
<div class="a row g" style="top:536px">
<span class="a id">4161</span>
<span class="a cp">Communication Systems</span>
<span class="a li">Emergency Call System</span>
<span class="a um">Each</span>
<span class="a bx b1">$1.00</span>
<span class="a bx b2 dis">$1.00</span>
<span class="a bx b3">1</span>
<span class="a bx b4">1</span>
<span class="a bx b5 dis">1</span>
<span class="a mk">0</span>
<span class="a btn bu">Update Dev/Amps</span>
<span class="a btn bi">Info</span>
</div>
<div class="a row " style="top:564px">
<span class="a id">4162</span>
<span class="a cp">Communication Systems</span>
<span class="a li">Communication System - Intercom</span>
<span class="a um">Each</span>
<span class="a bx b1">$1.00</span>
<span class="a bx b2 dis">$1.00</span>
<span class="a bx b3">1</span>
<span class="a bx b4">1</span>
<span class="a bx b5 dis">1</span>
<span class="a mk">0</span>
<span class="a btn bu">Update Dev/Amps</span>
<span class="a btn bi">Info</span>
</div>
<div class="a row g" style="top:592px">
<span class="a id">4171</span>
<span class="a cp">Lighting</span>
<span class="a li">Interior Lighting (In Unit)</span>
<span class="a um">Each</span>
<span class="a bx b1">$1.00</span>
<span class="a bx b2 dis">$1.00</span>
<span class="a bx b3">1</span>
<span class="a bx b4">1</span>
<span class="a bx b5 dis">1</span>
<span class="a mk">0</span>
<span class="a btn bu">Update Dev/Amps</span>
<span class="a btn bi">Info</span>
</div>
<div class="a row " style="top:620px">
<span class="a id">4180</span>
<span class="a cp">Domestic Water</span>
<span class="a li">Hot and Cold Water Distribution - Galvanized</span>
<span class="a um">LF</span>
<span class="a bx b1">$1.00</span>
<span class="a bx b2 ">$1.00</span>
<span class="a bx b3">1</span>
<span class="a bx b4">1</span>
<span class="a bx b5 ">1</span>
<span class="a mk">0</span>
<span class="a btn bu">Update Dev/Amps</span>
<span class="a btn bi">Info</span>
</div>
<div class="a row g" style="top:648px">
<span class="a id">4181</span>
<span class="a cp">Domestic Water</span>
<span class="a li">Hot and Cold Water Distribution - Copper / PVC</span>
<span class="a um">LF</span>
<span class="a bx b1">$1.00</span>
<span class="a bx b2 ">$1.00</span>
<span class="a bx b3">1</span>
<span class="a bx b4">1</span>
<span class="a bx b5 ">1</span>
<span class="a mk">0</span>
<span class="a btn bu">Update Dev/Amps</span>
<span class="a btn bi">Info</span>
</div>
<div class="a row " style="top:676px">
<span class="a id">4189</span>
<span class="a cp">Domestic Water</span>
<span class="a li">Hot Water Heater / Local</span>
<span class="a um">Each</span>
<span class="a bx b1">$1.00</span>
<span class="a bx b2 dis">$1.00</span>
<span class="a bx b3">1</span>
<span class="a bx b4">1</span>
<span class="a bx b5 dis">1</span>
<span class="a mk">0</span>
<span class="a btn bu">Update Dev/Amps</span>
<span class="a btn bi">Info</span>
</div>
<div class="a row g" style="top:704px">
<span class="a id">4190</span>
<span class="a cp">Electrical</span>
<span class="a li">Branch Panels</span>
<span class="a um">Each</span>
<span class="a bx b1">$1.00</span>
<span class="a bx b2 dis">$1.00</span>
<span class="a bx b3">1</span>
<span class="a bx b4">1</span>
<span class="a bx b5 dis">1</span>
<span class="a mk">0</span>
<span class="a btn bu">Update Dev/Amps</span>
<span class="a btn bi">Info</span>
</div>
<div class="a row " style="top:732px">
<span class="a id">4191</span>
<span class="a cp">Electrical</span>
<span class="a li">Wiring</span>
<span class="a um">LF</span>
<span class="a bx b1">$1.00</span>
<span class="a bx b2 dis">$1.00</span>
<span class="a bx b3">1</span>
<span class="a bx b4">1</span>
<span class="a bx b5 dis">1</span>
<span class="a mk">0</span>
<span class="a btn bu">Update Dev/Amps</span>
<span class="a btn bi">Info</span>
</div>
<div class="a row g" style="top:760px">
<span class="a id">4192</span>
<span class="a cp">Electrical</span>
<span class="a li">Outlets</span>
<span class="a um">Each</span>
<span class="a bx b1">$1.00</span>
<span class="a bx b2 ">$1.00</span>
<span class="a bx b3">1</span>
<span class="a bx b4">1</span>
<span class="a bx b5 ">1</span>
<span class="a mk">0</span>
<span class="a btn bu">Update Dev/Amps</span>
<span class="a btn bi">Info</span>
</div>
<div class="a row " style="top:788px">
<span class="a id">4210</span>
<span class="a cp">Stairs</span>
<span class="a li">Interior Stairs</span>
<span class="a um">SF</span>
<span class="a bx b1">$1.00</span>
<span class="a bx b2 ">$1.00</span>
<span class="a bx b3">1</span>
<span class="a bx b4">1</span>
<span class="a bx b5 ">1</span>
<span class="a mk">0</span>
<span class="a btn bu">Update Dev/Amps</span>
<span class="a btn bi">Info</span>
</div>
<div class="a" id="bbar"></div>
<span class="a btn hb"><u>H</u>ome</span>
<div class="a pal">Perform Action:</div>
<div class="a pabox"><span>Set Local Multiplier</span><svg class="dd" width="15" height="18" viewBox="0 0 15 18"><defs><linearGradient id="ddg" x1="0" y1="0" x2="0" y2="1"><stop offset="0" stop-color="#dbe6fc"/><stop offset="1" stop-color="#b4cbf6"/></linearGradient></defs><rect x="0.5" y="0.5" width="14" height="17" rx="2" fill="url(#ddg)" stroke="#b9ccf2"/><path d="M3.2 8.2 L7.5 12.5 L11.8 8.2" fill="none" stroke="#4a5f86" stroke-width="2.3"/></svg></div>
<span class="a btn gob">Go</span>
</div><div class="a" style="left:1903px;top:1011px;width:17px;height:17px;background:#f6f6f6"></div>
<div id="status" class="a"></div>
<div class="a" style="left:8px;top:1033px;font-size:11.6px;color:#15428b">Form View</div>
<div class="a" style="left:958px;top:1030px;width:1px;height:20px;background:#9db6dc;box-shadow:1px 0 0 #f0f6fd"></div>
<div class="a" style="left:1816px;top:1033px;font-size:11.2px;color:#15428b">Num Lock</div>
<div class="a" style="left:1875px;top:1029px;width:1px;height:21px;background:#9db6dc;box-shadow:1px 0 0 #f0f6fd"></div>
<div class="a" style="left:1881px;top:1030px;width:38px;height:18px;box-sizing:border-box;border:1px solid #9db4d8;border-radius:2px;background:linear-gradient(#e4eefa,#c9dbf2)"></div>
<div class="a" style="left:1882px;top:1031px;width:18px;height:16px;background:linear-gradient(#fde9b8 0,#fbd57c 50%,#f7c24a 51%,#fde39a 100%)"></div>
<svg class="a" style="left:1881px;top:1030px" width="38" height="18" viewBox="0 0 38 18"><rect x="4.5" y="4.5" width="11" height="9" fill="#fff" stroke="#444"/><path d="M5 6 h10 M6 9 h3 M6 11 h3 M10 8.5 h4 v3 h-4z" stroke="#444" fill="none" stroke-width="0.8"/><path d="M24 4 v9 h9 z" fill="none" stroke="#555" stroke-width="0.9"/><path d="M26 12 l7 -7" stroke="#555" stroke-width="1.2"/><rect x="23" y="13" width="11" height="2" fill="#555"/></svg>
<div id="taskbar" class="a"></div>
<div id="start" class="a"></div>
<svg class="a" style="left:8px;top:1055px" width="22" height="22" viewBox="0 0 22 22"><path d="M3 3 Q6 1.5 10 3 L9 10 Q5 8.5 2 10Z" fill="#f05a22"/><path d="M11 3.5 Q15 5 19 3.5 L18 10.5 Q14 12 10 10.5Z" fill="#7cc242"/><path d="M2 11 Q5 9.5 9 11 L8 18 Q4 16.5 1 18Z" fill="#3c8ff0"/><path d="M10 11.5 Q14 13 18 11.5 L17 18.5 Q13 20 9 18.5Z" fill="#fcc419"/></svg>
<div id="stxt" class="a">start</div>
<svg class="a" style="left:106px;top:1055px" width="70" height="20" viewBox="0 0 70 20">
 <defs><radialGradient id="ieg" cx="40%" cy="40%" r="60%"><stop offset="0" stop-color="#8fd3ff"/><stop offset="1" stop-color="#1a6fd8"/></radialGradient><radialGradient id="wmp" cx="45%" cy="40%" r="60%"><stop offset="0" stop-color="#ffffff"/><stop offset="1" stop-color="#c8d8f0"/></radialGradient></defs>
 <text x="3.5" y="15.5" font-family="Liberation Sans" font-weight="bold" font-size="17" fill="#5cc0ff" stroke="#1a5cc8" stroke-width="0.6">e</text>
 <path d="M3.5 16.5 C1 13 8 4 16 2.5 C19 2 19.5 4 17.5 6.5" fill="none" stroke="#f0b030" stroke-width="1.4"/>
 <rect x="27" y="3" width="12" height="13" rx="2" fill="#3a7ad8" stroke="#1f4a9a"/><rect x="29" y="5" width="8" height="9" rx="1.5" fill="#f4f8fd"/><path d="M31 9.5 l2 2 l3 -5" stroke="#2a5bc0" stroke-width="1.4" fill="none"/><circle cx="39.5" cy="4.5" r="1.3" fill="#e84020"/>
 <circle cx="57" cy="10" r="7" fill="url(#wmp)" stroke="#3aa04a" stroke-width="1.6"/><path d="M57 3 a7 7 0 0 1 7 7" stroke="#f0b020" stroke-width="1.6" fill="none"/><circle cx="57" cy="10" r="4.2" fill="#1e3f9e"/><path d="M55.5 7.8 l3.8 2.2 l-3.8 2.2z" fill="#fff"/>
</svg>
<div class="a tbb" style="left:182px;width:157px">Inbox - Microsoft Out...</div>
<div class="a tbb" style="left:342px;width:157px">Calendar - Microsoft ...</div>
<div class="a tbb" style="left:502px;width:157px">My Documents</div>
<div class="a tbb" style="left:662px;width:158px">WinZip Pro - 9 1 2011...</div>
<div class="a tbb act" style="left:822px;width:158px">Green PNA Tool</div>
<div class="a tbb" style="left:982px;width:158px">Microsoft PowerPoint ...</div>
<div class="a tbb" style="left:1142px;width:158px">Document1 - Microsof...</div>
<svg class="a" style="left:188px;top:1056px" width="1120" height="18" viewBox="0 0 1120 18">
 <g><rect x="2" y="2" width="13" height="13" rx="2" fill="#fbd28c" stroke="#e07a20"/><circle cx="9" cy="10" r="5" fill="#fde7b0" stroke="#d08a30"/><path d="M6 9 l3 3 l3 -3" stroke="#b06a20" fill="none"/></g>
 <g transform="translate(160,0)"><rect x="2" y="2" width="13" height="13" rx="2" fill="#fbd28c" stroke="#e07a20"/><circle cx="9" cy="10" r="5" fill="#fde7b0" stroke="#d08a30"/><path d="M6 9 l3 3 l3 -3" stroke="#b06a20" fill="none"/></g>
 <g transform="translate(320,0)"><rect x="2" y="4" width="14" height="11" fill="#f8e6a8" stroke="#a88a30"/><rect x="5" y="1" width="9" height="8" fill="#fff" stroke="#888"/></g>
 <g transform="translate(480,0)"><rect x="2" y="3" width="13" height="10" fill="#f5d040" stroke="#a08020"/><rect x="5" y="13" width="7" height="3" fill="#8898c0"/></g>
 <g transform="translate(640,0)"><path d="M3 15 l4 -5 l-3 -3 a5 5 0 1 1 4 3 l-4 5z" fill="#d8607a" stroke="#fff" stroke-width="0.8"/></g>
 <g transform="translate(800,0)"><rect x="2" y="2" width="14" height="14" rx="2" fill="#e8502a" stroke="#fff" stroke-width="0.6"/><circle cx="10" cy="9" r="4" fill="#fff"/><circle cx="10" cy="9" r="2.5" fill="#e8502a"/></g>
 <g transform="translate(960,0)"><rect x="3" y="1" width="12" height="15" fill="#fff" stroke="#555"/><text x="4" y="11" font-family="Liberation Serif" font-weight="bold" font-size="9" fill="#2040a0">W</text></g>
</svg>
<div id="tray" class="a"></div>
<svg class="a" style="left:1716px;top:1052px" width="204" height="28" viewBox="0 0 204 28">
 <rect x="7.5" y="6.5" width="13" height="13" fill="#fdfda0" stroke="#111" stroke-width="1.2"/><path d="M14 19.5 l3 3 v-3" fill="#fdfda0" stroke="#111" stroke-width="1"/><text x="14" y="17" font-family="Liberation Sans" font-weight="bold" font-size="11" fill="#1a2a6a" text-anchor="middle">?</text>
 <rect x="35.5" y="4.5" width="6" height="4" fill="none" stroke="#fff" stroke-width="1.1"/><rect x="32.5" y="6.5" width="6" height="4" fill="#2f66d6" stroke="#fff" stroke-width="1.1"/><path d="M33 16 h5 l-2.5 3z" fill="#fff"/>
 <circle cx="57.3" cy="13.4" r="8.3" fill="#2a8ef0" stroke="#cfe4fb" stroke-width="1"/><path d="M59.5 9 l-4 4.4 l4 4.4" stroke="#fff" stroke-width="2.2" fill="none"/>
 <rect x="69" y="5" width="13" height="14" rx="2" fill="#f7d39a" stroke="#e98a30" stroke-width="1"/><circle cx="77" cy="15" r="5.5" fill="#fde6b0" stroke="#e0a050" stroke-width="0.8"/><path d="M74.5 14 l2.5 2.5 l2.5 -2.5" stroke="#c07a20" fill="none" stroke-width="1"/>
 <path d="M87 14 a7 5.5 0 0 1 13 -3.5 M101 13 a7 5.5 0 0 1 -13 3.5" stroke="#13d013" stroke-width="3" fill="none"/><rect x="90" y="12" width="8" height="3" fill="#111"/>
 <path d="M105 8 l4 -3 l4 3 l4 -3 l4 3 l-4 3 l4 3 l-4 3 l-4 -3 l-4 3 l-4 -3 l4 -3z" fill="#d4e8fb" stroke="#5a94d0" stroke-width="0.7"/><circle cx="117" cy="18" r="4" fill="#1e9a2a" stroke="#fff" stroke-width="0.8"/>
 <rect x="122" y="9" width="9" height="8" fill="#22306a" stroke="#8090c0"/><rect x="128" y="4" width="9" height="8" fill="#22306a" stroke="#8090c0"/><ellipse cx="127" cy="20" rx="5" ry="2" fill="#b0b8d0"/>
 <text x="145.6" y="17" font-family="Liberation Sans" font-size="11" fill="#fff">11:56 AM</text>
</svg>

</body></html>
